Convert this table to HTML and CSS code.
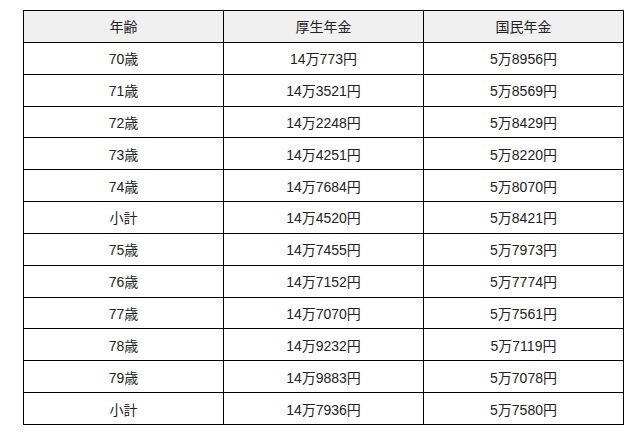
FILE: index.html
```html
<!DOCTYPE html>
<html lang="ja">
<head>
<meta charset="utf-8">
<link rel="stylesheet" href="styles.css">
</head>
<body>
<table class="pension">
<thead>
<tr><th>年齢</th><th>厚生年金</th><th>国民年金</th></tr>
</thead>
<tbody>
<tr><td>70歳</td><td>14万773円</td><td>5万8956円</td></tr>
<tr><td>71歳</td><td>14万3521円</td><td>5万8569円</td></tr>
<tr><td>72歳</td><td>14万2248円</td><td>5万8429円</td></tr>
<tr><td>73歳</td><td>14万4251円</td><td>5万8220円</td></tr>
<tr><td>74歳</td><td>14万7684円</td><td>5万8070円</td></tr>
<tr><td>小計</td><td>14万4520円</td><td>5万8421円</td></tr>
<tr><td>75歳</td><td>14万7455円</td><td>5万7973円</td></tr>
<tr><td>76歳</td><td>14万7152円</td><td>5万7774円</td></tr>
<tr><td>77歳</td><td>14万7070円</td><td>5万7561円</td></tr>
<tr><td>78歳</td><td>14万9232円</td><td>5万7119円</td></tr>
<tr><td>79歳</td><td>14万9883円</td><td>5万7078円</td></tr>
<tr><td>小計</td><td>14万7936円</td><td>5万7580円</td></tr>
</tbody>
</table>
</body>
</html>
```
FILE: styles.css
```css
html, body {
  margin: 0;
  padding: 0;
  background: #ffffff;
}
body {
  padding: 10px 0 0 23px;
  font-family: "Liberation Sans", Arial, "Noto Sans CJK JP", sans-serif;
  font-size: 14px;
  color: #222222;
}
.pension {
  border-collapse: collapse;
  width: 601px;
  table-layout: fixed;
}
.pension th,
.pension td {
  border: 1px solid #000000;
  height: 31.85px;
  padding: 0;
  text-align: center;
  vertical-align: middle;
  font-weight: normal;
  box-sizing: border-box;
}
.pension th {
  background: #f0f0f0;
}
```
